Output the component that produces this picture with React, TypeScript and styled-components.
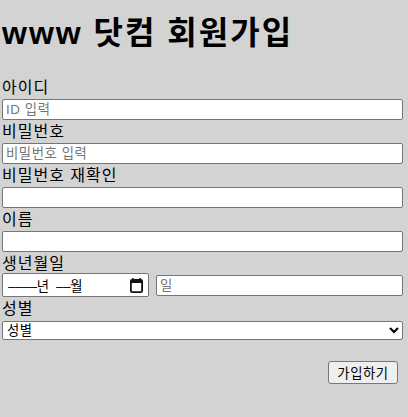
import styled, { createGlobalStyle } from "styled-components";

const GlobalStyle = createGlobalStyle`
  html, body {
    margin: 0;
    padding: 0;
    background: #d3d3d3;
  }
  body {
    font-family: "Liberation Sans", "Noto Sans CJK KR", sans-serif;
    color: #000;
  }
`;

const Page = styled.form`
  height: 417px;
  padding: 0 5px 0 2px;
  box-sizing: border-box;
  overflow: hidden;
`;

const Title = styled.h1`
  margin: 0 0 24px;
  padding-top: 15px;
  font-size: 32px;
  line-height: 37px;
  font-weight: bold;
  letter-spacing: 2px;
`;

const Field = styled.div`
  display: flex;
  flex-direction: column;
`;

const Label = styled.label`
  display: block;
  height: 23px;
  font-size: 16px;
  line-height: 24px;
  letter-spacing: 1px;
`;

const TextInput = styled.input`
  width: 100%;
  height: 21px;
  box-sizing: border-box;
  padding: 1px 3px;
  border: 1px solid #767676;
  border-radius: 2px;
  background: #fff;
  font-size: 13.33px;
  font-family: inherit;
  letter-spacing: 0.6px;
  &::placeholder {
    color: #757575;
  }
`;

const DateRow = styled.div`
  margin-top: -2px;
  display: flex;
  gap: 7px;
  align-items: center;
`;

const DateField = styled.div`
  width: 147px;
  height: 24px;
  flex: none;
  box-sizing: border-box;
  padding: 0 5px;
  display: flex;
  align-items: center;
  justify-content: space-between;
  border: 1px solid #767676;
  border-radius: 2px;
  background: #fff;
  font-size: 13.33px;
  letter-spacing: -0.2px;
  white-space: pre;
`;

const CalendarIcon = styled.svg`
  width: 13px;
  height: 15px;
  flex: none;
`;

const DayInput = styled(TextInput)`
  flex: 1;
  width: auto;
  min-width: 0;
`;

const GenderSelect = styled.select`
  width: 100%;
  height: 19px;
  margin-top: 1px;
  box-sizing: border-box;
  border: 1px solid #767676;
  border-radius: 2px;
  background: #fff;
  font-size: 13.33px;
  font-family: inherit;
  letter-spacing: 0.6px;
`;

const Actions = styled.div`
  display: flex;
  justify-content: flex-end;
  padding: 21px 5px 0 0;
`;

const SubmitButton = styled.button`
  width: 70px;
  height: 23px;
  padding: 0;
  border: 1px solid #767676;
  border-radius: 3px;
  background: #efefef;
  font-size: 13.33px;
  font-family: inherit;
  letter-spacing: 0.6px;
  color: #000;
`;

export default function App() {
  return (
    <>
      <GlobalStyle />
      <Page onSubmit={(e) => e.preventDefault()}>
        <Title>www 닷컴 회원가입</Title>
        <Field>
          <Label>아이디</Label>
          <TextInput type="text" placeholder="ID 입력" />
        </Field>
        <Field>
          <Label>비밀번호</Label>
          <TextInput type="password" placeholder="비밀번호 입력" />
        </Field>
        <Field>
          <Label>비밀번호 재확인</Label>
          <TextInput type="password" />
        </Field>
        <Field>
          <Label>이름</Label>
          <TextInput type="text" />
        </Field>
        <Field>
          <Label>생년월일</Label>
          <DateRow>
            <DateField>
              <span>––––년  ––월</span>
              <CalendarIcon viewBox="0 0 13 15">
                <path d="M3 0v2M10 0v2" stroke="#111" strokeWidth="1.5" />
                <rect x="0.9" y="1.9" width="11.2" height="12.2" rx="1.2" fill="none" stroke="#111" strokeWidth="1.8" />
                <rect x="1" y="2" width="11" height="3" fill="#111" />
              </CalendarIcon>
            </DateField>
            <DayInput type="text" placeholder="일" />
          </DateRow>
        </Field>
        <Field>
          <Label>성별</Label>
          <GenderSelect defaultValue="">
            <option value="">성별</option>
            <option value="m">남자</option>
            <option value="f">여자</option>
          </GenderSelect>
        </Field>
        <Actions>
          <SubmitButton type="submit">가입하기</SubmitButton>
        </Actions>
      </Page>
    </>
  );
}
